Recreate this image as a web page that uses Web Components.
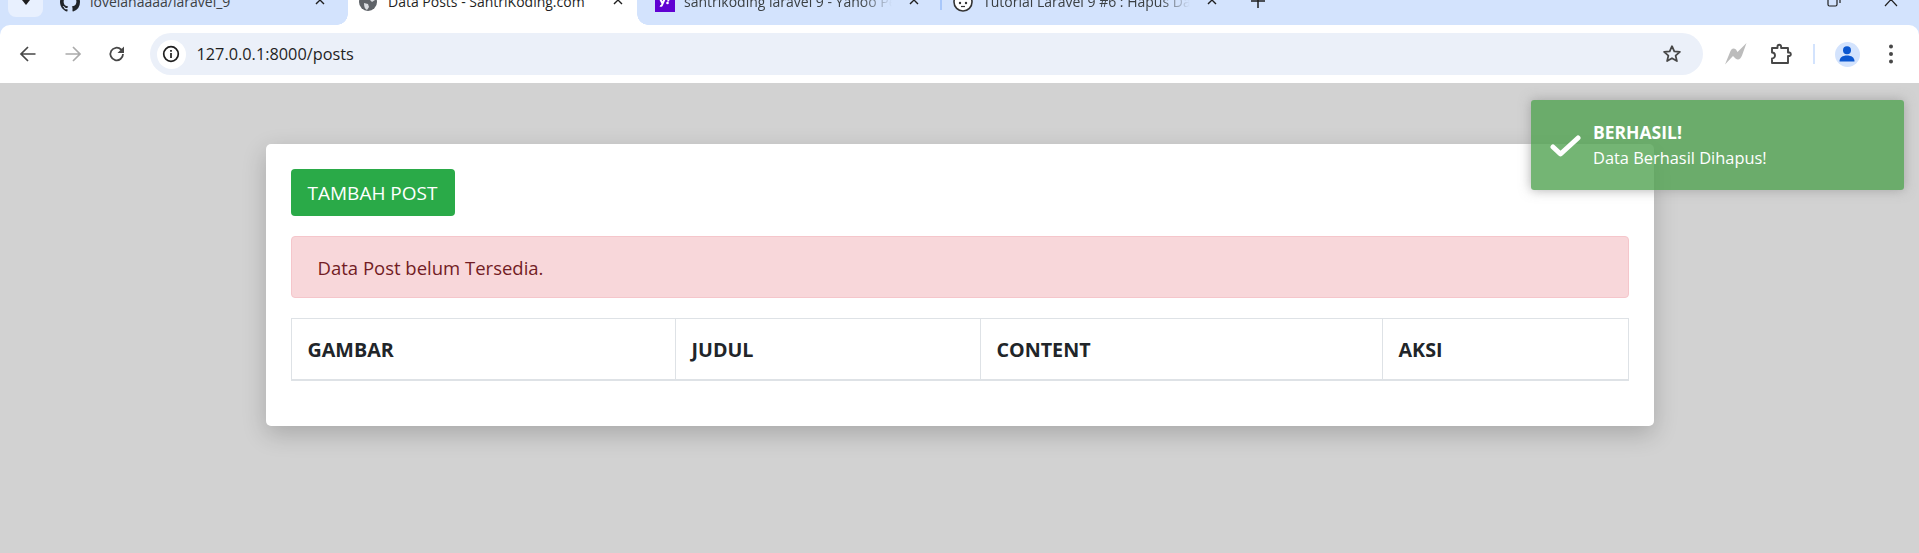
<!DOCTYPE html>
<html>
<head>
<meta charset="utf-8">
<title>Data Posts - SantriKoding.com</title>
<style>
  html, body { margin: 0; height: 553px; overflow: hidden; }
  body { background: #d2d2d2; font-family: "Open Sans", "Liberation Sans", sans-serif; color: #212529; }
</style>
</head>
<body>
<tab-strip>
  <strip-tab width="297" pad="9" title-gap="10" close-at="269">
    <svg slot="icon" width="20" height="20" viewBox="0 0 16 16"><path fill="#1f2328" d="M8 0C3.58 0 0 3.58 0 8c0 3.54 2.29 6.53 5.47 7.59.4.07.55-.17.55-.38 0-.19-.01-.82-.01-1.49-2.01.37-2.53-.49-2.69-.94-.09-.23-.48-.94-.82-1.13-.28-.15-.68-.52-.01-.53.63-.01 1.08.58 1.23.82.72 1.21 1.87.87 2.33.66.07-.52.28-.87.51-1.07-1.78-.2-3.64-.89-3.64-3.95 0-.87.31-1.59.82-2.15-.08-.2-.36-1.02.08-2.12 0 0 .67-.21 2.2.82.64-.18 1.32-.27 2-.27.68 0 1.36.09 2 .27 1.53-1.04 2.2-.82 2.2-.82.44 1.1.16 1.92.08 2.12.51.56.82 1.27.82 2.15 0 3.07-1.87 3.75-3.65 3.95.29.25.54.73.54 1.48 0 1.07-.01 1.93-.01 2.2 0 .21.15.46.55.38A8.013 8.013 0 0016 8c0-4.42-3.58-8-8-8z"/></svg>
    lovelanaaaa/laravel_9
  </strip-tab>
  <strip-tab active width="289" pad="10" title-gap="10" close-at="270">
    <svg slot="icon" width="20" height="20" viewBox="0 0 20 20"><circle cx="10" cy="10" r="9" fill="#5f6368"/><path fill="#d9dce0" d="M11 3c3 0 5.500 2 6 5l-3 2-2-2-3 0-1-3zM6 11l4 1 1 3-2 3c-2-1-3-3-3-7z"/></svg>
    Data Posts - SantriKoding.com
  </strip-tab>
  <strip-tab fade width="303" pad="18" title-gap="9" close-at="277">
    <svg slot="icon" width="20" height="20" viewBox="0 0 20 20"><rect width="20" height="20" fill="#6001d2"/><path fill="#fff" d="M3.500 6h2.400l1.500 3.300L8.900 6h2.300l-3.400 7.500c-.3.700-.8 1.300-1.900 1.300H4.600l.8-1.900h.6l.5-1.200z"/><circle cx="12.500" cy="11" r="1.300" fill="#fff"/><path fill="#fff" d="M13 5h2.300L14 9.500h-1.800z"/></svg>
    santrikoding laravel 9 - Yahoo Pencarian
  </strip-tab>
  <strip-tab fade sep width="297" pad="13" title-gap="10" close-at="272">
    <svg slot="icon" width="20" height="20" viewBox="0 0 20 20"><circle cx="10" cy="10" r="9" fill="#fff" stroke="#333" stroke-width="1.600"/><path fill="#333" d="M3 8c1-5 13-5 14 0l-3-1H6z"/><circle cx="7" cy="11" r="1.200" fill="#333"/><circle cx="13" cy="11" r="1.200" fill="#333"/><path d="M8 14.500h4" stroke="#333" stroke-width="1.200"/></svg>
    Tutorial Laravel 9 #6 : Hapus Data di Database
  </strip-tab>
</tab-strip>
<browser-toolbar url="127.0.0.1:8000/posts"></browser-toolbar>
<page-main>
  <post-card>
    <green-button>TAMBAH POST</green-button>
    <danger-alert>Data Post belum Tersedia.</danger-alert>
    <posts-table></posts-table>
  </post-card>
</page-main>
<toast-success heading="BERHASIL!">Data Berhasil Dihapus!</toast-success>

<script>
class TabStrip extends HTMLElement {
  constructor() {
    super();
    this.attachShadow({ mode: 'open' }).innerHTML = `
      <style>
        :host { display: flex; height: 25px; background: #d3e3fd; overflow: hidden; position: relative; }
        .search { width: 35px; height: 17px; margin-left: 8px; background: #e8f0fe; border-radius: 0 0 8px 8px; display: flex; justify-content: center; flex: none; }
        .search svg { margin-top: -3px; }
        .tabs { display: flex; margin-left: 8px; flex: none; }
        .new { margin-left: 14px; margin-top: -6px; flex: none; }
        .spacer { flex: 1; }
        .winbtn { margin-top: -7px; flex: none; }
        .max { margin-right: 43px; }
        .close { margin-right: 21px; }
      </style>
      <div class="search"><svg width="12" height="12" viewBox="0 0 12 12"><path d="M2 3h8L6 8z" fill="#1f1f1f"/></svg></div>
      <div class="tabs"><slot></slot></div>
      <svg class="new" width="14" height="14" viewBox="0 0 14 14"><path d="M7 0v14M0 7h14" stroke="#1f1f1f" stroke-width="1.500"/></svg>
      <div class="spacer"></div>
      <svg class="winbtn max" width="14" height="14" viewBox="0 0 14 14" fill="none" stroke="#1f1f1f" stroke-width="1.200"><rect x="1" y="3" width="9" height="10" rx="1.500"/><path d="M4 1h7a2 2 0 0 1 2 2v7"/></svg>
      <svg class="winbtn close" width="14" height="14" viewBox="0 0 14 14"><path d="M1 0l12 13M13 0L1 13" stroke="#1f1f1f" stroke-width="1.200"/></svg>
    `;
  }
}

class StripTab extends HTMLElement {
  constructor() {
    super();
    this.attachShadow({ mode: 'open' }).innerHTML = `
      <style>
        :host { display: block; height: 25px; position: relative; flex: none; color: #3b4043; font-size: 14px; }
        :host([active]) { background: #fff; color: #1f1f1f; }
        :host([active])::before, :host([active])::after { content: ""; position: absolute; bottom: 0; width: 11px; height: 11px; }
        :host([active])::before { left: -11px; background: radial-gradient(circle at 0 0, #d3e3fd 10.500px, #fff 11px); }
        :host([active])::after { right: -11px; background: radial-gradient(circle at 100% 0, #d3e3fd 10.500px, #fff 11px); }
        :host([sep])::before { content: ""; position: absolute; left: 0; top: 0; width: 2px; height: 10px; background: #a8c7fa; }
        .row { display: flex; align-items: center; height: 20px; margin-top: -8px; }
        .title { white-space: nowrap; overflow: hidden; line-height: 20px; }
        :host([fade]) .title { -webkit-mask-image: linear-gradient(to right, #000 85%, transparent 100%); mask-image: linear-gradient(to right, #000 85%, transparent 100%); }
        .icon { display: flex; width: 20px; height: 20px; flex: none; }
        .x { position: absolute; top: -5px; }
      </style>
      <div class="row">
        <span class="icon"><slot name="icon"></slot></span>
        <span class="title"><slot></slot></span>
      </div>
      <svg class="x" width="10" height="10" viewBox="0 0 10 10"><path d="M1 1l8 8M9 1L1 9" stroke="#1f1f1f" stroke-width="1.400"/></svg>
    `;
  }

  connectedCallback() {
    const width = +this.getAttribute('width');
    const pad = +this.getAttribute('pad');
    const gap = +this.getAttribute('title-gap');
    const closeAt = +this.getAttribute('close-at');
    this.style.width = width + 'px';
    const row = this.shadowRoot.querySelector('.row');
    row.style.paddingLeft = pad + 'px';
    const title = this.shadowRoot.querySelector('.title');
    title.style.marginLeft = gap + 'px';
    title.style.width = (closeAt - pad - 20 - gap - 22) + 'px';
    this.shadowRoot.querySelector('.x').style.left = (closeAt - 5) + 'px';
  }
}

class BrowserToolbar extends HTMLElement {
  constructor() {
    super();
    this.attachShadow({ mode: 'open' }).innerHTML = `
      <style>
        :host { display: block; background: #d3e3fd; }
        .bar { height: 58px; background: #fff; border-radius: 10px 10px 0 0; display: flex; align-items: center; padding-left: 6px; box-sizing: border-box; }
        .nav { width: 44.500px; height: 42px; display: flex; align-items: center; justify-content: center; flex: none; }
        .omni { width: 1553px; margin-left: 10px; height: 42px; border-radius: 21px; background: #ebf0f9; display: flex; align-items: center; padding-left: 7px; box-sizing: border-box; flex: none; }
        .info { width: 29px; height: 29px; background: #fff; border-radius: 50%; display: flex; align-items: center; justify-content: center; flex: none; }
        .url { font-size: 16.300px; color: #1f1f1f; margin-left: 11px; flex: 1; }
        .star { margin-right: 21px; flex: none; }
        .ext { flex: none; }
        .bolt { margin-left: 22px; }
        .puzzle { margin-left: 23px; }
        .sep { width: 2px; height: 20px; background: #d3e3fd; margin-left: 21px; flex: none; }
        .avatar { width: 25px; height: 25px; border-radius: 50%; background: #d3e3fd; margin-left: 20px; flex: none; display: flex; align-items: center; justify-content: center; }
        .menu { margin-left: 28px; flex: none; }
      </style>
      <div class="bar">
        <div class="nav"><svg width="18" height="18" viewBox="0 0 18 18" fill="none" stroke="#474747" stroke-width="1.700"><path d="M16.500 9H2M9 2L2 9l7 7"/></svg></div>
        <div class="nav"><svg width="18" height="18" viewBox="0 0 18 18" fill="none" stroke="#ababab" stroke-width="1.700"><path d="M1.500 9H16M9 2l7 7-7 7"/></svg></div>
        <div class="nav"><svg width="18" height="18" viewBox="0 0 18 18" fill="none" stroke="#474747" stroke-width="1.800"><path d="M15 9a6.300 6.300 0 1 1-1.900-4.500L15 6.500"/><path fill="#474747" stroke="none" d="M16 1.500V8H9.500z"/></svg></div>
        <div class="omni">
          <div class="info"><svg width="18" height="18" viewBox="0 0 18 18" fill="none" stroke="#1f1f1f" stroke-width="1.700"><circle cx="9" cy="9" r="7.300"/><path d="M9 8v5M9 5v1.700"/></svg></div>
          <div class="url"></div>
          <svg class="star" width="20" height="20" viewBox="0 0 20 20" fill="none" stroke="#474747" stroke-width="1.800" stroke-linejoin="round"><path d="M10 2.200l2.300 5.200 5.600.5-4.300 3.700 1.300 5.500-4.900-2.900-4.900 2.900 1.300-5.500L2.100 7.900l5.600-.5z"/></svg>
        </div>
        <svg class="ext bolt" width="22" height="22" viewBox="0 0 22 22"><path fill="#bcbcbc" d="M0 21.500L5.500 8Q7.500 4 11 6.500L12.500 9L21.500 0L17 12.500Q14.500 18.500 10.500 15.500L8 13z"/></svg>
        <svg class="ext puzzle" width="22" height="22" viewBox="0 0 22 22" fill="none" stroke="#474747" stroke-width="1.900" stroke-linejoin="round"><path d="M2 5h5.500V3.500a1.800 1.800 0 0 1 3.600 0V5H18v4.500h1.500a1.800 1.800 0 0 1 0 3.500H18v7H2v-4.500a3 3 0 0 0 0-6z"/></svg>
        <div class="sep"></div>
        <div class="avatar"><svg width="18" height="18" viewBox="0 0 18 18"><circle cx="9" cy="5.300" r="4" fill="#0b57d0"/><path fill="#0b57d0" d="M1.500 16.500c0-4 3-6 7.500-6s7.500 2 7.500 6z"/></svg></div>
        <svg class="menu" width="6" height="20" viewBox="0 0 6 20" fill="#474747"><circle cx="3" cy="2.500" r="2"/><circle cx="3" cy="10" r="2"/><circle cx="3" cy="17.500" r="2"/></svg>
      </div>
    `;
  }

  connectedCallback() {
    this.shadowRoot.querySelector('.url').textContent = this.getAttribute('url');
  }
}

class PageMain extends HTMLElement {
  constructor() {
    super();
    this.attachShadow({ mode: 'open' }).innerHTML = `
      <style>
        :host { display: flex; justify-content: center; padding-top: 61px; }
      </style>
      <slot></slot>
    `;
  }
}

class PostCard extends HTMLElement {
  constructor() {
    super();
    this.attachShadow({ mode: 'open' }).innerHTML = `
      <style>
        :host { display: flex; flex-direction: column; align-items: flex-start; width: 1388px; height: 282px; padding: 25px; box-sizing: border-box; background: #fff; border-radius: 5px; box-shadow: 0 8px 24px rgba(0, 0, 0, 0.2); }
      </style>
      <slot></slot>
    `;
  }
}

class GreenButton extends HTMLElement {
  constructor() {
    super();
    this.attachShadow({ mode: 'open' }).innerHTML = `
      <style>
        :host { display: flex; align-items: center; justify-content: center; width: 164px; height: 47px; padding-top: 1px; box-sizing: border-box; background: #2aaa48; color: #fff; border-radius: 4px; font-size: 19px; }
      </style>
      <slot></slot>
    `;
  }
}

class DangerAlert extends HTMLElement {
  constructor() {
    super();
    this.attachShadow({ mode: 'open' }).innerHTML = `
      <style>
        :host { display: flex; align-items: center; align-self: stretch; height: 62px; box-sizing: border-box; margin-top: 20px; padding: 1px 26px 0; background: #f8d7da; border: 1px solid #f5c6cb; border-radius: 4px; color: #721c24; font-size: 18.500px; }
      </style>
      <slot></slot>
    `;
  }
}

class PostsTable extends HTMLElement {
  constructor() {
    super();
    this.attachShadow({ mode: 'open' }).innerHTML = `
      <style>
        :host { display: block; align-self: stretch; margin-top: 20px; }
        table { width: 100%; border-collapse: collapse; table-layout: fixed; font-size: 19.700px; }
        th { height: 61px; padding: 1px 16px 0; text-align: left; font-weight: 700; color: #212529; border: 1px solid #dee2e6; border-bottom-width: 2px; box-sizing: border-box; }
      </style>
      <table>
        <colgroup><col style="width:384px"><col style="width:305px"><col style="width:402px"><col></colgroup>
        <thead><tr><th>GAMBAR</th><th>JUDUL</th><th>CONTENT</th><th>AKSI</th></tr></thead>
      </table>
    `;
  }
}

class ToastSuccess extends HTMLElement {
  constructor() {
    super();
    this.attachShadow({ mode: 'open' }).innerHTML = `
      <style>
        :host { display: flex; align-items: center; position: absolute; top: 100px; left: 1531px; width: 373px; height: 90px; box-sizing: border-box; padding-left: 19px; background: rgba(81, 163, 81, 0.8); border-radius: 3px; box-shadow: 0 0 12px rgba(153, 153, 153, 0.8); color: #fff; font-size: 16.400px; line-height: 25px; }
        svg { flex: none; }
        .text { margin-left: 12px; }
        .heading { font-weight: 700; font-size: 17.500px; }
      </style>
      <svg width="31" height="31" viewBox="0 0 31 31" fill="none" stroke="#fff" stroke-width="5" stroke-linecap="round" stroke-linejoin="round"><path d="M3 17l7.500 7L28 8"/></svg>
      <div class="text"><div class="heading"></div><div><slot></slot></div></div>
    `;
  }

  connectedCallback() {
    this.shadowRoot.querySelector('.heading').textContent = this.getAttribute('heading');
  }
}

customElements.define('tab-strip', TabStrip);
customElements.define('strip-tab', StripTab);
customElements.define('browser-toolbar', BrowserToolbar);
customElements.define('page-main', PageMain);
customElements.define('post-card', PostCard);
customElements.define('green-button', GreenButton);
customElements.define('danger-alert', DangerAlert);
customElements.define('posts-table', PostsTable);
customElements.define('toast-success', ToastSuccess);
</script>
</body>
</html>
